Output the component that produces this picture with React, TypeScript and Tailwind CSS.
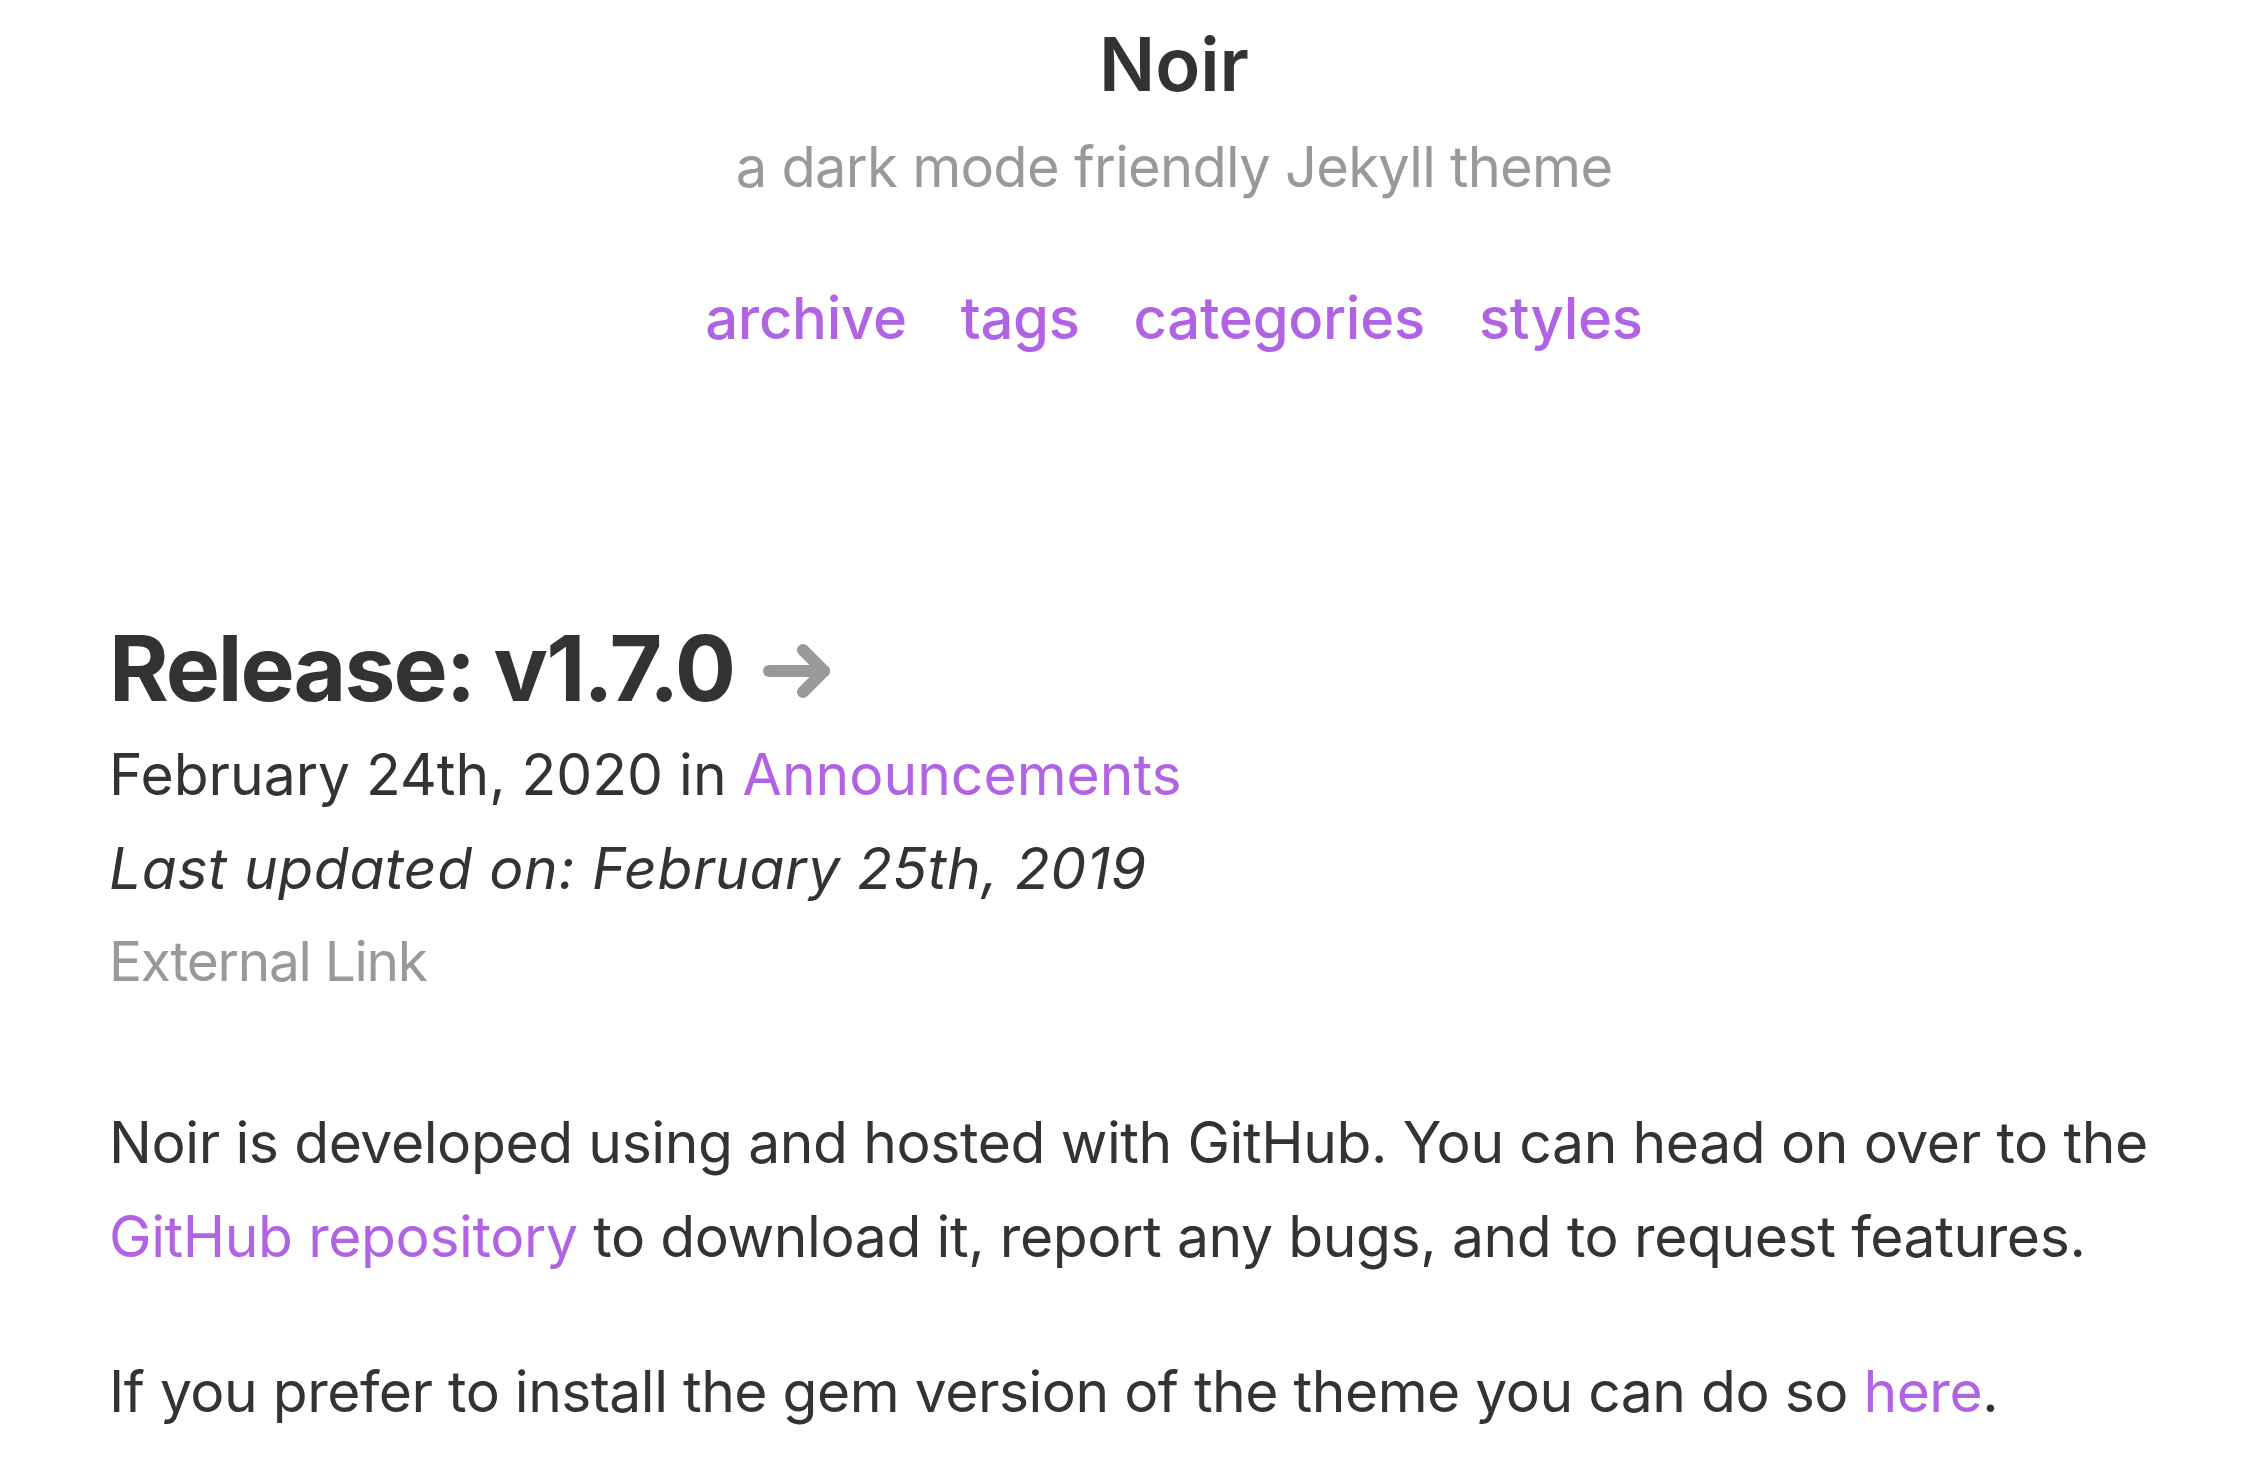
import type React from 'react';

const navLinks = ['archive', 'tags', 'categories', 'styles'];

const ArrowRight: React.FC = () => (
	<svg
		width="70"
		height="56"
		viewBox="0 0 70 56"
		fill="none"
		stroke="#999999"
		strokeWidth="12"
		strokeLinecap="round"
		strokeLinejoin="round"
		className="ml-[28px] mt-[4px]"
	>
		<path d="M7 28 H62" />
		<path d="M41 7 L62 28 L41 49" />
	</svg>
);

const App: React.FC = () => {
	return (
		<div
			className="min-h-screen bg-white pl-[109px] pr-[17px] text-[#333333]"
			style={{ fontFamily: 'Inter, "Noto Sans", sans-serif' }}
		>
			{/* Site header */}
			<header className="flex flex-col items-center pt-[20px]">
				<h1 className="text-[74px] leading-[1.2] font-semibold">Noir</h1>
				<p className="mt-[25px] text-[56px] leading-[1.2] tracking-[-0.7px] text-[#999999]">
					a dark mode friendly Jekyll theme
				</p>
				<nav className="mt-[82px] flex gap-[54px] text-[58px] leading-[70px] font-medium tracking-[-0.3px] text-[#b064e3]">
					{navLinks.map((link) => (
						<a key={link} href="#">
							{link}
						</a>
					))}
				</nav>
			</header>

			{/* Post */}
			<article className="mt-[261px]">
				<h2 className="flex items-center text-[91px] leading-[1.2] font-bold tracking-[-2px]">
					<span>Release: v1.7.0</span>
					<ArrowRight />
				</h2>
				<div className="mt-[5px] text-[57px] leading-[93.5px]">
					<p>
						February 24th, 2020 in{' '}
						<a href="#" className="text-[#b064e3]">
							Announcements
						</a>
					</p>
					<p className="italic tracking-[0.6px]">
						Last updated on: February 25th, 2019
					</p>
					<p className="text-[55px] tracking-[-1.3px] text-[#999999]">
						External Link
					</p>
				</div>

				<div className="mt-[87px] text-[57px] leading-[94px] tracking-[-0.4px]">
					<p>
						Noir is developed using and hosted with GitHub. You can head on
						over to the{' '}
						<a href="#" className="text-[#b064e3]">
							GitHub repository
						</a>{' '}
						to download it, report any bugs, and to request features.
					</p>
					<p className="mt-[61px] tracking-[-0.5px]">
						If you prefer to install the gem version of the theme you can do
						so{' '}
						<a href="#" className="text-[#b064e3]">
							here
						</a>
						.
					</p>
				</div>
			</article>
		</div>
	);
};

export default App;
